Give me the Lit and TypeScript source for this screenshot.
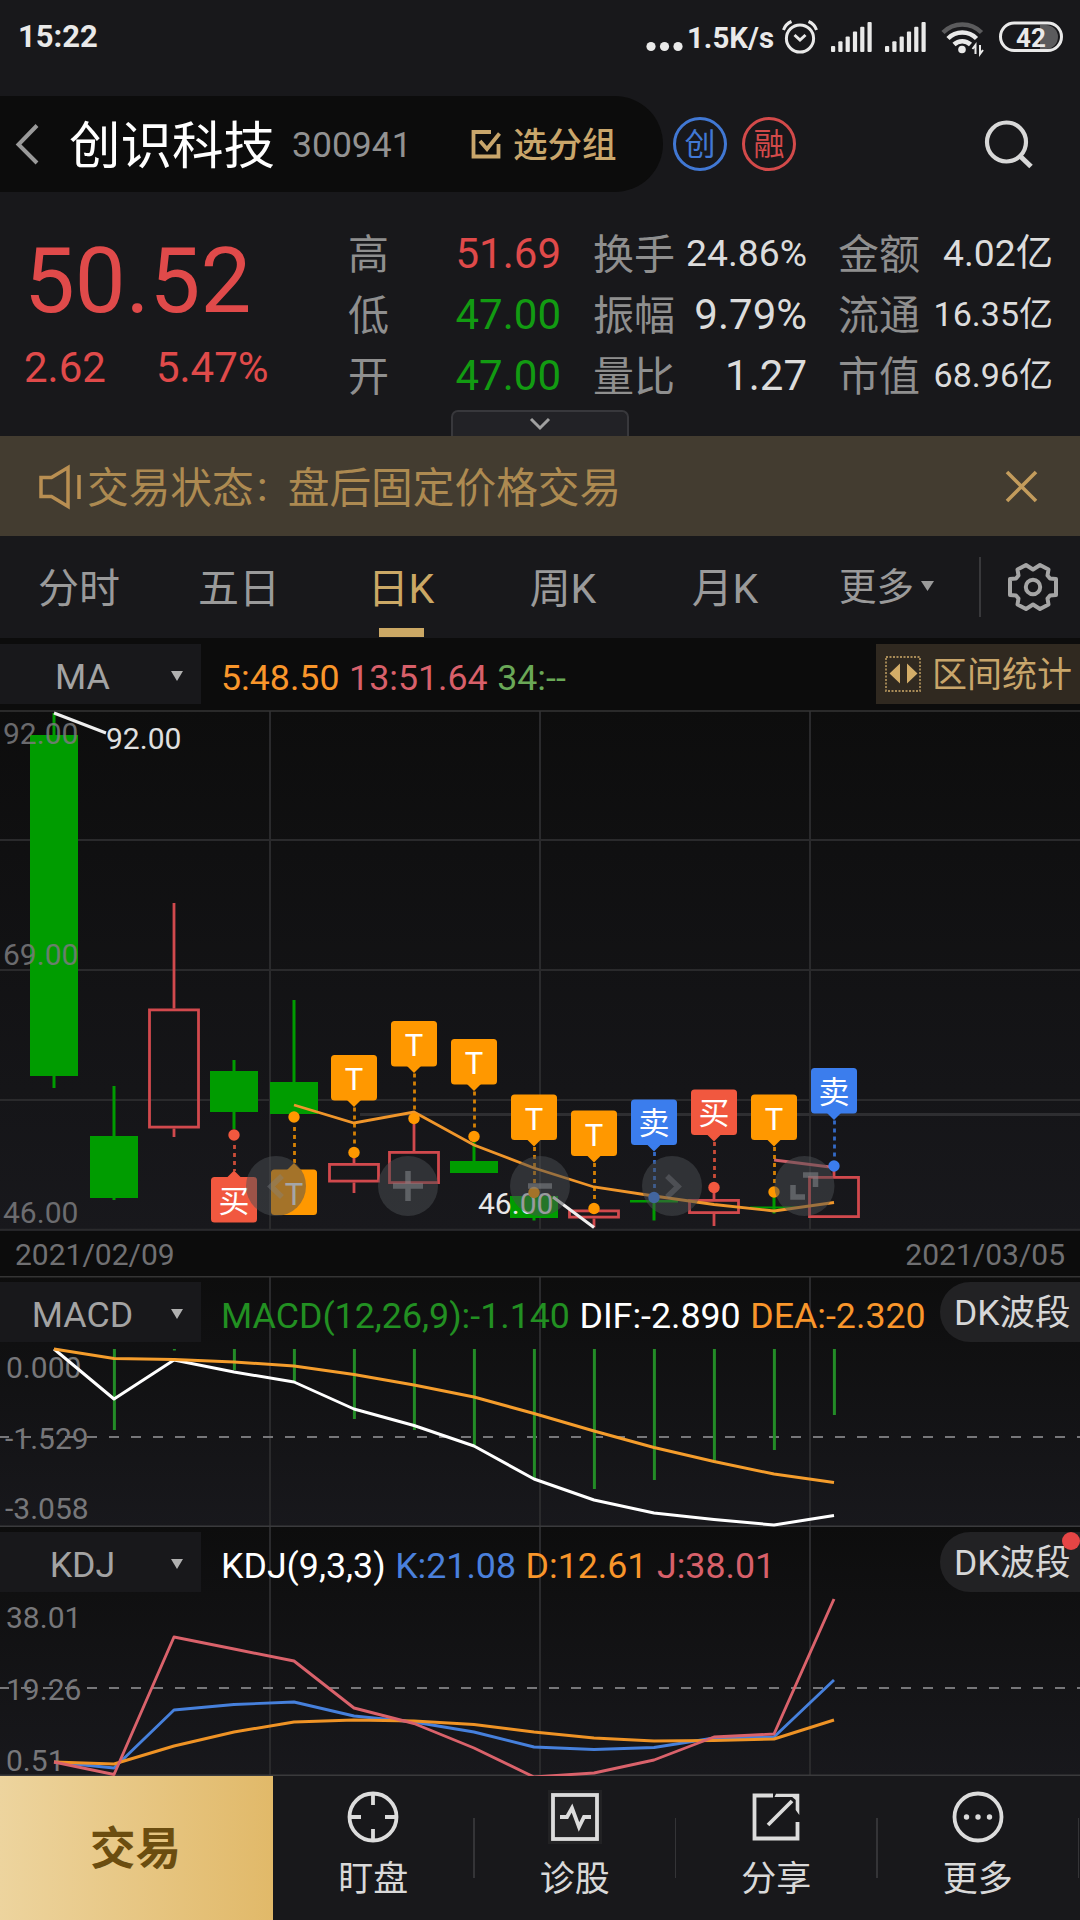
import { LitElement, html, svg, css } from "lit";
import { customElement, property } from "lit/decorators.js";
import { classMap } from "lit/directives/class-map.js";

type Point = [number, number];

/** Horizontal centre of the n-th trading day. */
const dayX = (n: number) => 54 + 60 * n;

const line = (ys: number[], first = 0) =>
  ys.map((y, i) => `${dayX(first + i)},${y}`).join(" ");

interface Candle {
  up?: boolean;
  wick: Point;
  body: Point;
}

interface Mark {
  day: number;
  kind: "T" | "买" | "卖";
  top: number;
  dot: number;
  below?: boolean;
}

const candles: Candle[] = [
  { wick: [713, 1088], body: [735, 1076] },
  { wick: [1086, 1200], body: [1136, 1198] },
  { up: true, wick: [903, 1137], body: [1008.5, 1128.5] },
  { wick: [1060, 1129], body: [1071, 1112] },
  { wick: [1000, 1114], body: [1082, 1114] },
  { up: true, wick: [1157, 1193], body: [1163, 1182.5] },
  { up: true, wick: [1124, 1184], body: [1151, 1184] },
  { wick: [1142, 1173], body: [1161, 1173] },
  { wick: [1196, 1220.5], body: [1196, 1218] },
  { up: true, wick: [1209, 1227.5], body: [1209.5, 1218.5] },
  { wick: [1200, 1220.5], body: [1200, 1202.5] },
  { up: true, wick: [1190, 1226], body: [1199, 1214] },
  { wick: [1196, 1213.5], body: [1206.5, 1208.5] },
  { up: true, wick: [1168, 1218], body: [1176, 1218] },
];

const marks: Mark[] = [
  { day: 3, kind: "买", top: 1177, dot: 1135, below: true },
  { day: 4, kind: "T", top: 1169.5, dot: 1117, below: true },
  { day: 5, kind: "T", top: 1055, dot: 1152.5 },
  { day: 6, kind: "T", top: 1021, dot: 1118.5 },
  { day: 7, kind: "T", top: 1039, dot: 1136.5 },
  { day: 8, kind: "T", top: 1094.5, dot: 1192.5 },
  { day: 9, kind: "T", top: 1110.5, dot: 1208.5 },
  { day: 10, kind: "卖", top: 1099.5, dot: 1197.5 },
  { day: 11, kind: "买", top: 1089.5, dot: 1187.5 },
  { day: 12, kind: "T", top: 1094.5, dot: 1192 },
  { day: 13, kind: "卖", top: 1068, dot: 1166 },
];

const markColor = { T: "#ff9800", 买: "#f1583f", 卖: "#3b7ded" };

const ma5 = [1105, 1123, 1112, 1145, 1168, 1187, 1196, 1204.5, 1211, 1202.5];

const macdBars = [1349, 1430, 1350.5, 1370, 1382, 1419, 1430, 1445, 1480, 1489, 1480, 1463, 1450, 1415];
const dif = [1349, 1399, 1360, 1372, 1382, 1409, 1425.5, 1446, 1479, 1500, 1513, 1519.5, 1525, 1515.5];
const dea = [1349, 1358.5, 1359.5, 1362, 1366, 1374.5, 1385, 1397, 1413.5, 1431, 1447.5, 1461.5, 1474, 1482.5];

const kdjJ = [1762, 1774.5, 1637, 1649, 1661, 1708, 1723.5, 1748, 1777, 1773, 1760, 1737, 1734, 1599];
const kdjK = [1762, 1768, 1710, 1704.5, 1702, 1716, 1722, 1732, 1747, 1749.5, 1747.5, 1738, 1737, 1680];
const kdjD = [1762, 1764, 1746, 1732, 1722, 1720, 1721, 1724.5, 1732, 1738, 1741, 1740.5, 1739, 1720];

const sans = css`
  :host {
    display: block;
    font-family: Roboto, "Noto Sans CJK SC", sans-serif;
  }
  svg {
    display: block;
  }
`;

@customElement("status-bar")
class StatusBar extends LitElement {
  static styles = [
    sans,
    css`
      .bar {
        height: 96px;
        box-sizing: border-box;
        padding: 0 16px 23px 18px;
        display: flex;
        align-items: center;
        color: #e9e9e9;
        font-size: 31px;
        font-weight: 700;
      }
      .time {
        flex: 1;
      }
      .icons {
        display: block;
      }
    `,
  ];

  private signal(x: number) {
    return [0, 1, 2, 3, 4, 5].map(
      (i) => svg`<rect x=${x + i * 7.3} y=${45 - i * 4.8} width="4.2" height=${6 + i * 4.8} rx="1"/>`,
    );
  }

  render() {
    return html`<div class="bar">
      <span class="time">15:22</span>
      <svg class="icons" width="424" height="72" viewBox="640 0 424 72" fill="#e9e9e9">
        <circle cx="651" cy="45.5" r="4.6" /><circle cx="664.500" cy="45.5" r="4.6" /><circle cx="678" cy="45.5" r="4.6" />
        <text x="687" y="47" font-size="30" font-weight="700" textLength="87" lengthAdjust="spacingAndGlyphs">1.5K/s</text>
        <g fill="none" stroke="#e9e9e9" stroke-width="3">
          <circle cx="800" cy="37.500" r="13.600" />
          <path d="M794.500 34l5.500 5 5.500-5M783.500 29q2-6 8-8.500M816.500 29q-2-6-8-8.500" />
        </g>
        ${this.signal(831)} ${this.signal(885)}
        <g fill="none" stroke-width="4.500">
          <path d="M943 31.500a27 27 0 0 1 38.500 0" stroke="#5b5b5d" />
          <path d="M948 37.500a20 20 0 0 1 28.500 0M954 43.500a12 12 0 0 1 16.500 0" stroke="#e9e9e9" />
        </g>
        <circle cx="962" cy="48.500" r="3.800" />
        <path d="M975.500 53v-9l-3 4M980 44v9l3-4" fill="none" stroke="#e9e9e9" stroke-width="2" />
        <path d="M1040 24h6a12 12 0 0 1 0 24h-6z" fill="#5b5b5d" />
        <rect x="1000.500" y="22" width="61" height="27.500" rx="13.700" fill="none" stroke="#e9e9e9" stroke-width="3" />
        <text x="1031" y="45.500" font-size="26" font-weight="700" text-anchor="middle">42</text>
      </svg>
    </div>`;
  }
}

@customElement("stock-header")
class StockHeader extends LitElement {
  static styles = [
    sans,
    css`
      .row {
        display: flex;
        align-items: center;
        height: 96px;
      }
      .pill {
        display: flex;
        align-items: center;
        width: 663px;
        height: 96px;
        box-sizing: border-box;
        padding-left: 14px;
        border-radius: 0 48px 48px 0;
        background: #0c0c0c;
        line-height: 60px;
      }
      .name {
        margin-left: 30px;
        padding-top: 5px;
        width: 207px;
        font-size: 51.5px;
        color: #fff;
        white-space: nowrap;
      }
      .code {
        margin-left: 16px;
        padding-top: 2px;
        width: 178px;
        font-size: 35.5px;
        color: #929292;
      }
      .group {
        margin-left: 11px;
        padding-top: 1px;
        font-size: 34.5px;
        font-weight: 500;
        color: #c9a66b;
      }
      .badge {
        box-sizing: border-box;
        width: 54px;
        height: 54px;
        margin-left: 15px;
        border: 3px solid #4178d4;
        border-radius: 50%;
        text-align: center;
        font-size: 31px;
        line-height: 49px;
        color: #4178d4;
      }
      .first {
        margin-left: 10px;
      }
      .red {
        border-color: #d34a4a;
        color: #d34a4a;
      }
      .search {
        margin-left: auto;
        margin-right: 46px;
      }
    `,
  ];

  render() {
    return html`<div class="row">
      <div class="pill">
        <svg width="25" height="42" viewBox="0 0 25 42" fill="none" stroke="#9a9a9a" stroke-width="4"><path d="M23 2.500L4.500 21.500l18.500 18.500" /></svg>
        <span class="name">创识科技</span>
        <span class="code">300941</span>
        <svg width="32" height="32" viewBox="0 0 32 32" fill="none" stroke="#c9a66b" stroke-width="3.800">
          <path d="M21 4H3.500v24.500h25V16" /><path d="M10 13l7 8L29.500 5.500" />
        </svg>
        <span class="group">选分组</span>
      </div>
      <span class="badge first">创</span>
      <span class="badge red">融</span>
      <svg class="search" width="50" height="50" viewBox="0 0 50 50" fill="none" stroke="#d8d8d8" stroke-width="4.200">
        <circle cx="22.500" cy="23" r="19.500" /><path d="M36 37l11 10.500" stroke-width="5" />
      </svg>
    </div>`;
  }
}

@customElement("quote-summary")
class QuoteSummary extends LitElement {
  static styles = [
    sans,
    css`
      .wrap {
        position: relative;
        height: 244px;
        box-sizing: border-box;
        padding: 31px 28px 0 24px;
        display: grid;
        grid-template-columns: 324px 213px 32px 214px 31px 215px;
        color: #dcdcdc;
      }
      .red {
        color: #e04a4a;
      }
      .green {
        color: #129b12;
      }
      .price {
        padding-top: 2px;
        font-size: 90.5px;
        line-height: 112px;
      }
      .delta {
        display: flex;
        gap: 50px;
        padding-top: 1px;
        font-size: 42px;
        line-height: 60px;
      }
      .list {
        display: grid;
        grid-template-rows: repeat(3, 61px);
      }
      .c2 {
        grid-column: 2;
      }
      .c4 {
        grid-column: 4;
      }
      .c6 {
        grid-column: 6;
      }
      .item {
        display: flex;
        align-items: center;
        justify-content: space-between;
        line-height: 61px;
        font-size: 42px;
        white-space: nowrap;
      }
      .label {
        padding-top: 3px;
        font-size: 41px;
        color: #8f8f8f;
      }
      .mid {
        font-size: 37.3px;
      }
      .small {
        font-size: 34px;
      }
      .handle {
        position: absolute;
        left: 451px;
        bottom: 0;
        width: 178px;
        height: 26px;
        box-sizing: border-box;
        border: 2px solid #38383c;
        border-bottom: 0;
        border-radius: 7px 7px 0 0;
        background: #222226;
        display: flex;
        justify-content: center;
        align-items: center;
      }
    `,
  ];

  private item(label: string, value: string, cls = "") {
    return html`<div class="item"><span class="label">${label}</span><span class=${cls}>${value}</span></div>`;
  }

  render() {
    return html`<div class="wrap">
      <div class="red">
        <div class="price">50.52</div>
        <div class="delta"><span>2.62</span><span>5.47%</span></div>
      </div>
      <div class="list c2">
        ${this.item("高", "51.69", "red")} ${this.item("低", "47.00", "green")} ${this.item("开", "47.00", "green")}
      </div>
      <div class="list c4">
        ${this.item("换手", "24.86%", "mid")} ${this.item("振幅", "9.79%")} ${this.item("量比", "1.27")}
      </div>
      <div class="list c6">
        ${this.item("金额", "4.02亿", "mid")} ${this.item("流通", "16.35亿", "small")} ${this.item("市值", "68.96亿", "small")}
      </div>
      <div class="handle">
        <svg width="22" height="14" viewBox="0 0 22 14" fill="none" stroke="#a0a0a0" stroke-width="3"><path d="M2 2l9 9 9-9" /></svg>
      </div>
    </div>`;
  }
}

@customElement("status-notice")
class StatusNotice extends LitElement {
  static styles = [
    sans,
    css`
      .notice {
        display: flex;
        align-items: center;
        height: 100px;
        box-sizing: border-box;
        padding: 2px 41px 0 38px;
        background: #433c30;
        color: #ad8a51;
        font-size: 41.7px;
        line-height: 60px;
        white-space: nowrap;
      }
      .text {
        flex: 1;
        display: flex;
        margin-left: 3px;
        padding-top: 4px;
      }
      .colon {
        width: 34px;
        font-size: 34px;
      }
    `,
  ];

  render() {
    return html`<div class="notice">
      <svg width="46" height="48" viewBox="0 0 46 48" fill="none" stroke="#b98f52" stroke-width="3.500">
        <path d="M3 14.500h10.500L30 4.500v39L13.500 33.500H3zM41 12v24" />
      </svg>
      <span class="text">交易状态<span class="colon">：</span>盘后固定价格交易</span>
      <svg width="36" height="36" viewBox="0 0 36 36" fill="none" stroke="#c39c5c" stroke-width="3.600"><path d="M4 3l29 29M33 3L4 32" /></svg>
    </div>`;
  }
}

@customElement("period-tabs")
class PeriodTabs extends LitElement {
  static styles = [
    sans,
    css`
      .tabs {
        display: flex;
        height: 102px;
        color: #9a9a9a;
        line-height: 106px;
        font-size: 41px;
      }
      .tab {
        display: flex;
        flex-direction: column;
        align-items: center;
        width: 162px;
      }
      .tab:first-child {
        width: 158px;
      }
      .tab::after {
        content: "";
        width: 45px;
        height: 9px;
        margin-top: -14px;
      }
      .active {
        color: #cba865;
      }
      .active::after {
        background: #cba865;
      }
      .more {
        display: flex;
        align-items: center;
        gap: 7px;
        width: 140px;
        margin-left: 33px;
        font-size: 37.5px;
      }
      .more svg {
        margin-top: -2px;
      }
      .gear {
        display: flex;
        align-items: center;
        align-self: center;
        height: 60px;
        padding-left: 26px;
        border-left: 2px solid #38383b;
      }
    `,
  ];

  render() {
    const tabs = ["分时", "五日", "日K", "周K", "月K"];
    return html`<div class="tabs">
      ${tabs.map((t) => html`<div class=${classMap({ tab: true, active: t === "日K" })}>${t}</div>`)}
      <div class="more">更多<svg width="13" height="10" viewBox="0 0 13 10" fill="#9a9a9a"><path d="M0 0h13L6.500 10z" /></svg></div>
      <div class="gear">
        <svg width="52" height="52" viewBox="-26 -26 52 52" fill="none" stroke="#a5a5a5" stroke-width="4" stroke-linejoin="round">
          <path d="M-7-22L0-17.500 7-22 15.500-17.500 14.500-11.500 17-8.500 23-8V8L17 8.500 14.500 11.500 15.500 17.500 7 22 0 17.500-7 22-15.500 17.500-14.500 11.500-17 8.500-23 8V-8L-17-8.500-14.500-11.500-15.500-17.500z" />
          <circle r="7.200" />
        </svg>
      </div>
    </div>`;
  }
}

@customElement("panel-head")
class PanelHead extends LitElement {
  @property() name = "";

  static styles = [
    sans,
    css`
      .head {
        display: flex;
        align-items: center;
        height: 60px;
        line-height: 60px;
        font-size: 35.75px;
      }
      .select {
        display: grid;
        grid-template-columns: 165px auto 1fr;
        align-items: center;
        width: 201px;
        height: 60px;
        margin-right: 20px;
        background: #18181b;
        color: #a3a3a3;
        text-align: center;
      }
      .label {
        padding-top: 3px;
      }
      .values {
        flex: 1;
        display: flex;
        gap: 9.5px;
        padding-top: 7px;
        white-space: nowrap;
      }
    `,
  ];

  render() {
    return html`<div class="head">
      <div class="select">
        <span class="label">${this.name}</span>
        <svg width="24" height="10" viewBox="0 0 24 10" fill="#b0b0b0"><path d="M6 0h12l-6 10z" /></svg>
      </div>
      <div class="values"><slot></slot></div>
      <slot name="action"></slot>
    </div>`;
  }
}

@customElement("k-chart")
class KChart extends LitElement {
  static styles = [
    sans,
    css`
      text {
        font-size: 30px;
      }
      .axis {
        fill: #7b7b7e;
        opacity: 0.85;
      }
      .tag {
        font-size: 31px;
        fill: #fff;
      }
    `,
  ];

  private candle(c: Candle, i: number) {
    const x = dayX(i);
    const [top, bottom] = c.body;
    if (!c.up)
      return svg`<g fill="#009c00">
        <rect x=${x - 1.5} y=${c.wick[0]} width="3" height=${c.wick[1] - c.wick[0]}/>
        <rect x=${x - 24} y=${top} width="48" height=${bottom - top}/></g>`;
    return svg`<g fill="none" stroke="#d1494d" stroke-width="2.800">
      <path d="M${x} ${c.wick[0]}V${top}M${x} ${bottom}V${c.wick[1]}"/>
      <rect x=${x - 24.5} y=${top + 1.4} width="49" height=${bottom - top - 2.8}/></g>`;
  }

  private mark(m: Mark) {
    const x = dayX(m.day);
    const color = markColor[m.kind];
    const bottom = m.top + 45.5;
    const tip = m.below
      ? `M${x - 7} ${m.top + 0.5}l7-7 7 7z`
      : `M${x - 7} ${bottom - 0.5}l7 7 7-7z`;
    const dash = m.below ? [m.dot + 10, m.top - 6] : [bottom + 7, m.dot - 7];
    return svg`
      <path d="M${x + 0.5} ${dash[0]}V${dash[1]}" stroke=${color} stroke-opacity=".82" stroke-width="2.800" stroke-dasharray="4 4"/>
      <circle cx=${x} cy=${m.dot} r="5.700" fill=${color}/>
      <rect x=${x - 23} y=${m.top} width="46" height="45.500" rx="3.500" fill=${color}/>
      <path d=${tip} fill=${color}/>
      <text class="tag" x=${x} y=${m.top + (m.kind === "T" ? 35 : 34.5)} text-anchor="middle">${m.kind}</text>`;
  }

  render() {
    return html`<svg width="1080" height="521" viewBox="0 710 1080 521">
      <defs>
        <linearGradient id="bg" x2="0" y2="1"><stop stop-color="#0d0d0d" /><stop offset="1" stop-color="#18181c" /></linearGradient>
      </defs>
      <rect y="710" width="1080" height="521" fill="url(#bg)" />
      <path d="M0 840H1080M0 970H1080M0 1100H1080M0 1229.800H1080M270 711V1230M540 711V1230M810 711V1230" stroke="#2a2a2c" stroke-width="2" />
      <path d="M0 711H1080" stroke="#343434" stroke-width="1.500" />
      <path d="M360 1114.500H1080" stroke="#2e2e31" stroke-width="3" />
      ${candles.map((c, i) => this.candle(c, i))}
      <text class="axis" x="3" y="744">92.00</text>
      <text class="axis" x="3" y="965">69.00</text>
      <text class="axis" x="3" y="1223">46.00</text>
      <polyline points=${line(ma5, 4)} fill="none" stroke="#f0962b" stroke-width="2.800" />
      <path d="M774 1160L834 1167.500" stroke="#cf6069" stroke-width="2.800" />
      <path d="M54 713L106 733M553 1197L594 1227.500" stroke="#eee" stroke-width="3" />
      <text x="106" y="748.500" fill="#e0e0e0">92.00</text>
      <text x="478" y="1213.500" fill="#e8e8e8">46.00</text>
      ${marks.map((m) => this.mark(m))}
      <g fill="#4a4d52" fill-opacity=".5">
        ${[276, 408, 540, 672, 804.5].map((x) => svg`<circle cx=${x} cy="1186" r="30"/>`)}
      </g>
      <g fill="none" stroke="#85888c" stroke-opacity=".55" stroke-width="5.500">
        <path d="M282 1176l-11 10.500 11 10.500M667 1176l11 10.500-11 10.500" stroke-opacity=".35" />
        <path d="M393 1186h30M408 1171v30M528 1186h24" />
        <path d="M803 1175h12.500v12M793 1185v12h12" />
      </g>
    </svg>`;
  }
}

const subGrid = (top: number, bottom: number, dashY: number) => svg`
  <defs><linearGradient id="bg" x2="0" y2="1"><stop stop-color="#0d0d0d"/><stop offset="1" stop-color="#18181c"/></linearGradient></defs>
  <rect y=${top} width="1080" height=${bottom - top} fill="url(#bg)"/>
  <path d="M270 ${top}V${bottom}M540 ${top}V${bottom}M810 ${top}V${bottom}" stroke="#2a2a2c" stroke-width="2"/>
  <path d="M-1 ${dashY}H1080" stroke="#77777a" stroke-width="2" stroke-dasharray="10 12"/>
  <path d="M0 ${bottom - 0.7}H1080" stroke="#3a3a3c" stroke-width="1.500"/>`;

@customElement("macd-chart")
class MacdChart extends LitElement {
  static styles = [
    sans,
    css`
      text {
        font-size: 30px;
        fill: #77777a;
      }
    `,
  ];

  render() {
    return html`<svg width="1080" height="251" viewBox="0 1276 1080 251">
      ${subGrid(1276, 1527, 1437)}
      <path d="M0 1276.700H1080" stroke="#343434" stroke-width="1.500" />
      <text x="6" y="1378">0.000</text>
      <text x="5" y="1449">-1.529</text>
      <text x="5" y="1519">-3.058</text>
      ${macdBars.map((y, i) => svg`<path d="M${dayX(i) + 0.4} 1349V${y}" stroke="#238c27" stroke-width="3"/>`)}
      <g fill="none" stroke-width="3" stroke-linejoin="round">
        <polyline points=${line(dif)} stroke="#fff" />
        <polyline points=${line(dea)} stroke="#f59d2c" />
      </g>
    </svg>`;
  }
}

@customElement("kdj-chart")
class KdjChart extends LitElement {
  static styles = MacdChart.styles;

  render() {
    return html`<svg width="1080" height="249" viewBox="0 1527 1080 249">
      ${subGrid(1527, 1776, 1688)}
      <text x="6" y="1628">38.01</text>
      <text x="6" y="1700">19.26</text>
      <text x="6" y="1771">0.51</text>
      <g fill="none" stroke-width="2.900" stroke-linejoin="round">
        <polyline points=${line(kdjK)} stroke="#4680dc" />
        <polyline points=${line(kdjD)} stroke="#ef9325" />
        <polyline points=${line(kdjJ)} stroke="#da626b" />
      </g>
    </svg>`;
  }
}

@customElement("bottom-nav")
class BottomNav extends LitElement {
  static styles = [
    sans,
    css`
      .nav {
        display: flex;
        height: 144px;
        background: #18181b;
      }
      .trade {
        width: 273px;
        box-sizing: border-box;
        padding-right: 2px;
        background: linear-gradient(90deg, #edd49e, #e1b969);
        color: #6b4d10;
        font-size: 45.5px;
        font-weight: 700;
        line-height: 148px;
        text-align: center;
      }
      .item {
        position: relative;
        width: 201.5px;
        box-sizing: border-box;
        padding: 14px 1px 0 0;
        display: flex;
        flex-direction: column;
        align-items: center;
        color: #d9d9d9;
        font-size: 35px;
        line-height: 50px;
        gap: 11px;
      }
      .item::after {
        content: "";
        position: absolute;
        right: 0;
        top: 42px;
        width: 1.5px;
        height: 60px;
        background: #343437;
      }
    `,
  ];

  render() {
    const items = [
      { label: "盯盘", icon: svg`<circle r="23.500"/><path d="M0-23v11M0 23v-11M-23 0h11M23 0h-11"/>` },
      {
        label: "诊股",
        icon: svg`<rect x="-27" y="-27" width="54" height="54" fill="#222224" stroke="none"/><rect x="-22" y="-22" width="44" height="44"/><path d="M-15 0h7l5-9 7 19 5-10h7"/>`,
      },
      {
        label: "分享",
        icon: svg`<path d="M-3-21.500h-18.500v43h43V5"/><path d="M-8 8L16-16"/><path d="M0-23.300h23.300v21.300l-3.600-5V-17l-3.500-3H-1.500z" fill="#dcdcdc" stroke="none"/>`,
      },
      {
        label: "更多",
        icon: svg`<circle r="23.500"/><g fill="#dcdcdc" stroke="none"><circle cx="-11.500" r="2.700"/><circle r="2.700"/><circle cx="11.500" r="2.700"/></g>`,
      },
    ];
    return html`<div class="nav">
      <div class="trade">交易</div>
      ${items.map(
        (i) => html`<div class="item">
          <svg width="54" height="54" viewBox="-27 -27 54 54" fill="none" stroke="#dcdcdc" stroke-width="3.800">${i.icon}</svg>
          <span>${i.label}</span>
        </div>`,
      )}
    </div>`;
  }
}

@customElement("app-root")
class AppRoot extends LitElement {
  static styles = [
    sans,
    css`
      :host {
        width: 1080px;
        height: 1920px;
        overflow: hidden;
        background: #18181b;
      }
      .dark {
        background: #0c0c0c;
        padding: 6px 0;
      }
      .range {
        display: flex;
        align-items: center;
        gap: 11px;
        width: 204px;
        height: 60px;
        box-sizing: border-box;
        padding-left: 9px;
        background: #302920;
        color: #c9a66b;
        font-size: 35px;
        line-height: 60px;
        white-space: nowrap;
      }
      .range span {
        padding-top: 4px;
      }
      .dates {
        display: flex;
        justify-content: space-between;
        height: 45px;
        padding: 0 15px;
        background: #0c0c0c;
        color: #707072;
        font-size: 30px;
        line-height: 48px;
      }
      .panel {
        display: grid;
      }
      .panel > * {
        grid-area: 1 / 1;
      }
      .layer {
        align-self: start;
        padding-top: 6px;
      }
      .low {
        padding-top: 5px;
      }
      .dk {
        position: relative;
        width: 140px;
        height: 60px;
        box-sizing: border-box;
        padding-left: 14px;
        border-radius: 30px 0 0 30px;
        background: #222224;
        color: #d6d6d6;
        font-size: 35.5px;
        line-height: 63px;
        white-space: nowrap;
      }
      .dot {
        position: absolute;
        right: 0;
        top: 0;
        width: 18px;
        height: 18px;
        border-radius: 50%;
        background: #e64545;
      }
      .orange {
        color: #f9962b;
      }
      .rose {
        color: #d8606a;
      }
      .lime {
        color: #6aa857;
      }
      .green {
        color: #229022;
      }
      .white {
        color: #fff;
      }
      .blue {
        color: #4a80dc;
      }
    `,
  ];

  render() {
    return html`
      <status-bar></status-bar>
      <stock-header></stock-header>
      <quote-summary></quote-summary>
      <status-notice></status-notice>
      <period-tabs></period-tabs>
      <div class="dark">
        <panel-head name="MA">
          <span class="orange">5:48.50</span><span class="rose">13:51.64</span><span class="lime">34:--</span>
          <div class="range" slot="action">
            <svg width="36" height="36" viewBox="0 0 36 36" fill="#c9a66b">
              <rect x="1" y="1" width="34" height="34" fill="none" stroke="#a98c58" stroke-width="1.800" stroke-dasharray="2 1.500" />
              <path d="M15 7.500v20L4.500 17.500zM22 7.500v20L32.500 17.500z" fill="#d3ad68" />
            </svg>
            <span>区间统计</span>
          </div>
        </panel-head>
      </div>
      <k-chart></k-chart>
      <div class="dates"><span>2021/02/09</span><span>2021/03/05</span></div>
      <div class="panel">
        <macd-chart></macd-chart>
        <panel-head class="layer" name="MACD">
          <span class="green">MACD(12,26,9):-1.140</span><span class="white">DIF:-2.890</span><span class="orange">DEA:-2.320</span>
          <div class="dk" slot="action">DK波段</div>
        </panel-head>
      </div>
      <div class="panel">
        <kdj-chart></kdj-chart>
        <panel-head class="layer low" name="KDJ">
          <span class="white">KDJ(9,3,3)</span><span class="blue">K:21.08</span><span class="orange">D:12.61</span><span class="rose">J:38.01</span>
          <div class="dk" slot="action">DK波段<span class="dot"></span></div>
        </panel-head>
      </div>
      <bottom-nav></bottom-nav>
    `;
  }
}
